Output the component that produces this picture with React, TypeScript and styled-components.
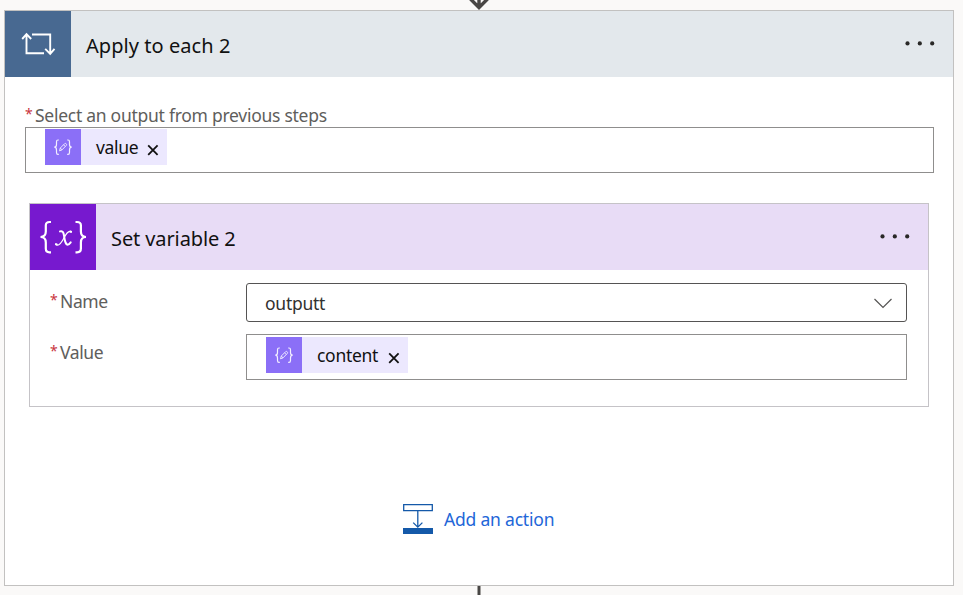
import React from "react";
import styled, { createGlobalStyle } from "styled-components";

const GlobalStyle = createGlobalStyle`
  * { box-sizing: border-box; }
  body {
    margin: 0;
    background: #faf9f8;
    font-family: "Noto Sans", "Open Sans", sans-serif;
    overflow: hidden;
  }
`;

const Canvas = styled.main`
  width: 963px;
  height: 595px;
  padding-left: 4px;
  display: flex;
  flex-direction: column;
`;

const Connector = styled.div<{ $height: number }>`
  width: 950px;
  height: ${(p) => p.$height}px;
  display: flex;
  justify-content: center;
  svg { display: block; }
`;

const Scope = styled.section`
  width: 950px;
  height: 576px;
  border: 1px solid #c2c1c0;
  background: #fff;
`;

const ActionCard = styled.section`
  width: 900px;
  height: 204px;
  margin: 30px 0 0 4px;
  border: 1px solid #c5c3c7;
  background: #fff;
`;

const Header = styled.header<{ $bg: string }>`
  height: 66px;
  display: flex;
  align-items: center;
  background: ${(p) => p.$bg};
`;

const HeaderIcon = styled.div<{ $bg: string }>`
  width: 66px;
  height: 66px;
  background: ${(p) => p.$bg};
  svg { display: block; }
`;

const Title = styled.h2<{ $spacing: number }>`
  flex: 1;
  margin: 0;
  padding: 4px 0 0 15px;
  font-size: 20px;
  line-height: 28px;
  font-weight: 400;
  letter-spacing: ${(p) => p.$spacing}px;
  color: #111;
`;

const MenuButton = styled.button`
  width: 32px;
  height: 12px;
  margin-right: 17px;
  padding: 0;
  border: 0;
  background: none;
  svg { display: block; }
`;

const ScopeBody = styled.div`
  padding: 26px 19px 0 20px;
`;

const Label = styled.label<{ $spacing?: number }>`
  display: flex;
  height: 24px;
  font-size: 17.5px;
  line-height: 24px;
  letter-spacing: ${(p) => p.$spacing ?? -0.4}px;
  color: #605e5c;
  white-space: nowrap;
`;

const Required = styled.span`
  width: 10px;
  font-size: 14px;
  line-height: 22px;
  letter-spacing: 0;
  color: #c8343c;
`;

const TokenField = styled.div<{ $top: number }>`
  height: 46px;
  padding: ${(p) => p.$top}px 0 0 19px;
  border: 1px solid #8f8e8d;
  background: #fff;
`;

const TokenChip = styled.span<{ $width: number }>`
  width: ${(p) => p.$width}px;
  height: 36px;
  display: flex;
  background: #ece8fe;
  color: #111;
`;

const TokenIcon = styled.span`
  width: 36px;
  height: 36px;
  background: #8b6ff7;
  svg { display: block; }
`;

const TokenText = styled.span<{ $spacing: number }>`
  flex: 1;
  padding-left: 15px;
  font-size: 17.5px;
  line-height: 37px;
  letter-spacing: ${(p) => p.$spacing}px;
`;

const RemoveButton = styled.button`
  width: 12px;
  height: 12px;
  margin: 15px 8px 0 0;
  padding: 0;
  border: 0;
  background: none;
  svg { display: block; }
`;

const Form = styled.div`
  display: grid;
  grid-template-columns: 196px 661px;
  grid-template-rows: 39px 46px;
  row-gap: 12px;
  padding: 13px 0 0 20px;
`;

const LabelCell = styled.div`
  padding-top: 6px;
`;

const Select = styled.div`
  height: 39px;
  padding: 0 14px 0 18px;
  display: flex;
  align-items: center;
  justify-content: space-between;
  border: 1px solid #555453;
  border-radius: 3px;
  font-size: 17.5px;
  letter-spacing: -0.25px;
  color: #323130;
`;

const AddAction = styled.button`
  display: flex;
  align-items: center;
  gap: 11px;
  margin: 97px 0 0 378px;
  padding: 0;
  border: 0;
  background: none;
  font: 400 17.5px/30px "Noto Sans", sans-serif;
  letter-spacing: -0.2px;
  color: #2266d8;
  white-space: nowrap;
  svg { display: block; }
`;

const Dots = () => (
  <MenuButton aria-label="Menu">
    <svg width="32" height="12" fill="#292827">
      <circle cx="3.5" cy="5.4" r="2.1" />
      <circle cx="15.8" cy="5.4" r="2.1" />
      <circle cx="28.2" cy="5.4" r="2.1" />
    </svg>
  </MenuButton>
);

const LoopIcon = () => (
  <svg width="66" height="66" fill="none" stroke="#fff" strokeWidth="1.9">
    <path d="M27 23.5H45.2V42M40.2 37.8L45.2 42.8L49.5 37.8M39 42.2H21.5V24M17.2 28L21.5 23.2L26.2 28" />
  </svg>
);

const VariableIcon = () => (
  <svg width="66" height="66" fill="none" stroke="#fff" strokeLinecap="round">
    <path
      strokeWidth="2.2"
      strokeLinecap="butt"
      d="M21 18H19.5Q15.8 18 15.8 21.5V27.5Q15.8 33 10.5 33Q15.8 33 15.8 38.5V44.5Q15.8 48.3 19.5 48.3H21M45.5 18H47Q50.9 18 50.9 21.5V27.5Q50.9 33 56 33Q50.9 33 50.9 38.5V44.5Q50.9 48.3 47 48.3H45.5"
    />
    <path strokeWidth="2" d="M30 27.4C34 26 33.7 31 34.8 36C35.8 41.3 38 42 40.7 38.3" />
    <path strokeWidth="1.2" d="M41 27.6C37 26 34.8 33 32.2 37C29.8 41 27.6 41.8 26 40.4" />
    <path strokeWidth="2.2" d="M40.4 27.6L41 27.8M26 40.2L26.6 40.5" />
  </svg>
);

const ExpressionIcon = () => (
  <svg width="36" height="36" fill="none" stroke="#f3efff" strokeWidth="1.2">
    <path d="M13.8 11H13Q11.5 11 11.5 12.8V15.5Q11.5 18.2 9.3 18.2Q11.5 18.2 11.5 21V23.5Q11.5 25.4 13 25.4H13.8M22.2 11H23Q24.5 11 24.5 12.8V15.5Q24.5 18.2 26.7 18.2Q24.5 18.2 24.5 21V23.5Q24.5 25.4 23 25.4H22.2" />
    <path strokeWidth="0.9" d="M14.5 21.8L15.3 19L19.5 14.8Q20.5 14 21.2 14.8Q22 15.5 21.2 16.5L17 20.9ZM18.6 15.8L20.2 17.4M15.3 19L17 20.9" />
  </svg>
);

const Chevron = () => (
  <svg width="18" height="12" fill="none" stroke="#555453" strokeWidth="1.2">
    <path d="M.5 2L9 10.5L17.5 2" />
  </svg>
);

const InsertIcon = () => (
  <svg width="30" height="30" fill="none" stroke="#1459a9">
    <path strokeWidth="1.3" d="M.7 .7H29.3V6.6H.7ZM14.8 6.6V23.3M10.2 18.6L14.8 23.2L19.4 18.6" />
    <path fill="#1459a9" stroke="none" d="M0 24H30V30H0Z" />
  </svg>
);

const Token = ({ text, width, spacing }: { text: string; width: number; spacing: number }) => (
  <TokenChip $width={width}>
    <TokenIcon><ExpressionIcon /></TokenIcon>
    <TokenText $spacing={spacing}>{text}</TokenText>
    <RemoveButton aria-label={`Remove ${text}`}>
      <svg width="12" height="12" stroke="#111" strokeWidth="1.8">
        <path d="M1.2 1.4L10.6 10.8M10.6 1.4L1.2 10.8" />
      </svg>
    </RemoveButton>
  </TokenChip>
);

export default function App() {
  return (
    <Canvas>
      <GlobalStyle />
      <Connector $height={10}>
        <svg width="24" height="10" fill="none" stroke="#484644" strokeWidth="3.4">
          <path d="M12 0V8M3.5 -1L12 7.5L20.5 -1" />
        </svg>
      </Connector>
      <Scope>
        <Header $bg="#e3e8ec">
          <HeaderIcon $bg="#486991"><LoopIcon /></HeaderIcon>
          <Title $spacing={0.06}>Apply to each 2</Title>
          <Dots />
        </Header>
        <ScopeBody>
          <Label $spacing={-0.27}><Required>*</Required>Select an output from previous steps</Label>
          <TokenField $top={1}><Token text="value" width={122} spacing={-0.35} /></TokenField>
          <ActionCard>
            <Header $bg="#e8dcf6">
              <HeaderIcon $bg="#7719cf"><VariableIcon /></HeaderIcon>
              <Title $spacing={-0.1}>Set variable 2</Title>
              <Dots />
            </Header>
            <Form>
              <LabelCell><Label><Required>*</Required>Name</Label></LabelCell>
              <Select>outputt<Chevron /></Select>
              <LabelCell><Label><Required>*</Required>Value</Label></LabelCell>
              <TokenField $top={2}><Token text="content" width={142} spacing={-0.3} /></TokenField>
            </Form>
          </ActionCard>
          <AddAction><InsertIcon />Add an action</AddAction>
        </ScopeBody>
      </Scope>
      <Connector $height={9}>
        <svg width="24" height="9" stroke="#484644" strokeWidth="3">
          <path d="M12 0V9" />
        </svg>
      </Connector>
    </Canvas>
  );
}
